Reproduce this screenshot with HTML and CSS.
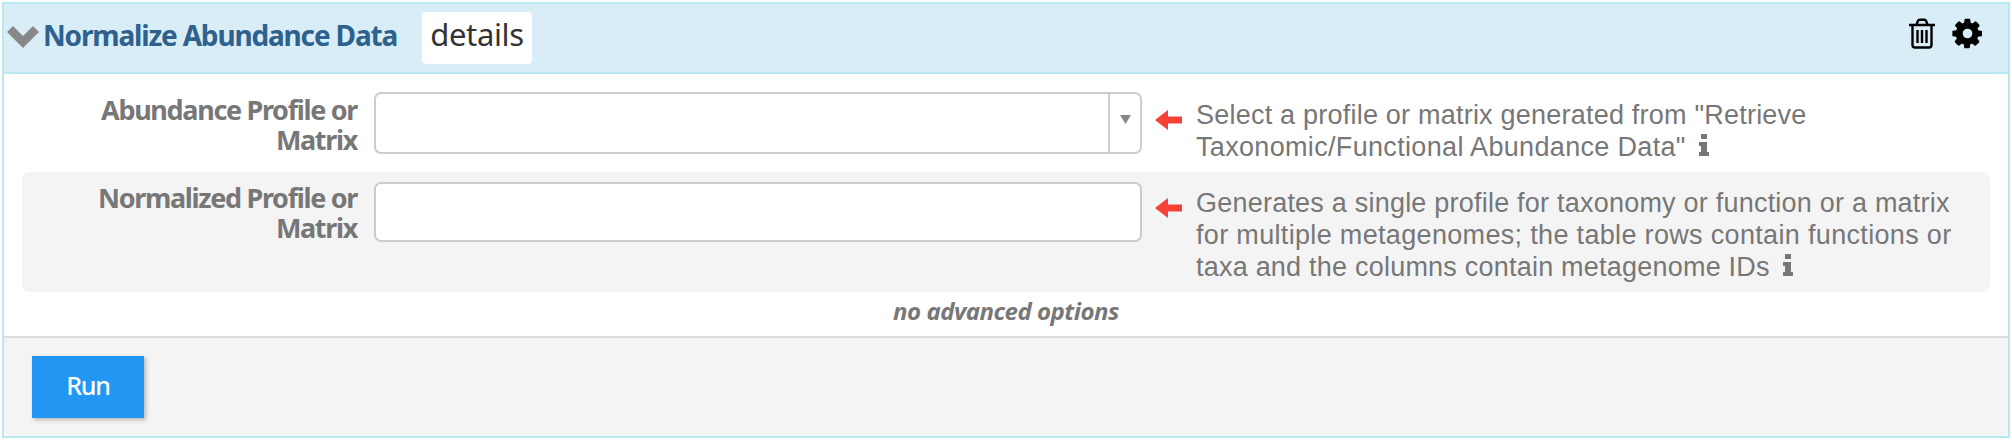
FILE: index.html
```html
<!DOCTYPE html>
<html lang="en">
<head>
<meta charset="utf-8">
<title>Normalize Abundance Data</title>
<link rel="stylesheet" href="styles.css">
</head>
<body>
<section class="panel">
  <header class="header">
    <svg class="chevron" viewBox="0 0 32 22"><path d="M0 6 6 0 16 10 26 0 32 6 16 22Z" fill="#888"/></svg>
    <h1 class="title"><span>Normalize Abundance Data</span></h1>
    <button class="details"><span>details</span></button>
    <div class="tools">
      <svg class="trash" viewBox="0 0 26 31" fill="none" stroke="#000" stroke-width="2.4"><path d="M0 7H26M7.500 6.500 9 2.800Q9.500 1.700 10.600 1.700H15.400Q16.500 1.700 17 2.800L18.500 6.500M3.500 7V27Q3.500 29.500 6 29.500H20Q22.500 29.500 22.500 27V7M8.500 12V25M13 12V25M17.500 12V25"/></svg>
      <svg class="gear" viewBox="0 0 1536 1536"><path fill-rule="evenodd" d="M1024 768a256 256 0 1 0-512 0 256 256 0 0 0 512 0zM1536 659v222c0 16-12 31-28 34l-185 28c-10 31-23 61-39 91 34 49 71 94 107 138 10 12 10 30 1 42-27 37-179 202-218 202-11 0-21-4-31-10l-138-108c-30 15-60 28-91 38-7 60-13 125-29 186-4 15-18 27-34 27H629c-16 0-32-12-34-28l-28-184c-31-10-61-22-90-37l-141 107c-8 7-19 10-30 10s-22-5-30-13C226 1361 149 1287 98 1216c-10-14-9-28 0-42 34-47 72-91 107-139-17-31-30-64-40-96L-18 912c-10-3-16-18-16-34V655c0-16 12-31 27-34l186-28c9-30 22-61 39-91-34-49-71-94-108-138-10-12-10-28 0-42 27-37 179-201 218-201 11 0 22 4 31 11l138 106c29-15 59-28 91-38 7-60 12-125 28-185 4-16 18-28 35-28h222c16 0 32 12 34 28l28 184c31 10 61 23 90 38l142-107c8-7 19-10 29-10 11 0 22 4 31 12 50 47 128 120 179 193 9 13 8 27-1 40-34 48-72 92-107 140 17 31 30 64 39 96l183 28c16 2 28 17 28 33z"/></svg>
    </div>
  </header>
  <div class="body">
    <div class="row first">
      <label class="label"><span>Abundance Profile or</span><span>Matrix</span></label>
      <div class="field select"><div class="toggle"><svg class="tri" viewBox="0 0 11 9"><path d="M0 0H11L5.500 9Z" fill="#888"/></svg></div></div>
      <svg class="arrow" viewBox="0 0 27 20"><path d="M0 10 13 0V6.500H27V13.500H13V20Z" fill="#f44336"/></svg>
      <p class="help"><span>Select a profile or matrix generated from "Retrieve</span><br><span class="wide">Taxonomic/Functional Abundance Data"</span><svg class="info" viewBox="0 0 10 22"><path d="M2 0H8V5H2ZM0 8H8V18H10V22H0V18H2V12H0Z" fill="#777"/></svg></p>
    </div>
    <div class="row shaded">
      <label class="label"><span>Normalized Profile or</span><span>Matrix</span></label>
      <div class="field"></div>
      <svg class="arrow" viewBox="0 0 27 20"><path d="M0 10 13 0V6.500H27V13.500H13V20Z" fill="#f44336"/></svg>
      <p class="help"><span>Generates a single profile for taxonomy or function or a matrix</span><br><span class="wide">for multiple metagenomes; the table rows contain functions or</span><br><span>taxa and the columns contain metagenome IDs</span><svg class="info" viewBox="0 0 10 22"><path d="M2 0H8V5H2ZM0 8H8V18H10V22H0V18H2V12H0Z" fill="#777"/></svg></p>
    </div>
    <div class="none"><span>no advanced options</span></div>
  </div>
  <footer class="footer"><button class="run"><span>Run</span></button></footer>
</section>
</body>
</html>
```
FILE: styles.css
```css
* { box-sizing: border-box; }
body { margin: 0; padding: 2px; background: #fff; font-family: "Noto Sans", sans-serif; color: #777; }
button { border: 0; padding: 0; font-family: inherit; }
svg { display: block; flex: none; }

.panel { width: 2008px; height: 436px; border: 2px solid #b8e8f0; display: flex; flex-direction: column; }

.header { height: 70px; background: #d9edf7; border-bottom: 2px solid #b8e8f0; display: flex; align-items: flex-start; padding-left: 3px; }
.chevron { width: 32px; height: 22px; margin-top: 22px; }
.title { width: 379px; margin: 11px 0 0 4px; font-size: 28px; line-height: 40px; font-weight: 700; letter-spacing: -1.170px; color: #2e618d; white-space: nowrap; }
.details { width: 110px; height: 52px; margin-top: 8px; border-radius: 4px; background: #fff; color: #333; font-size: 31px; line-height: 44px; letter-spacing: -0.350px; padding-bottom: 8px; }
.tools { margin-left: auto; display: flex; gap: 18px; padding-right: 26px; margin-top: 14px; }
.trash { width: 26px; height: 31px; }
.gear { width: 29px; height: 29px; margin-top: 1px; overflow: visible; }

.body { height: 262px; padding: 8px 18px 0; }
.row { display: grid; grid-template-columns: 335px 17px 768px 13px 27px 14px 1fr; border-radius: 8px; align-items: start; padding-top: 10px; }
.first { height: 90px; }
.shaded { height: 120px; background: #f4f4f4; }
.label { grid-column: 1; display: flex; flex-direction: column; align-items: flex-end; font-size: 27px; line-height: 30px; font-weight: 700; letter-spacing: -1.330px; padding-top: 3px; white-space: nowrap; }
.shaded .label { padding-top: 1px; }
.field { grid-column: 3; height: 60px; background: #fff; border: 2px solid #ccc; border-radius: 7px; }
.select { height: 62px; display: flex; justify-content: flex-end; }
.toggle { width: 32px; border-left: 2px solid #ccc; padding: 21px 0 0 10px; }
.tri { width: 11px; height: 9px; }
.arrow { grid-column: 5; width: 27px; height: 20px; margin-top: 18px; }
.shaded .arrow { margin-top: 16px; }
.help { grid-column: 7; margin: 7px 0 0; font: 27px/32px "Liberation Sans", Arial, sans-serif; letter-spacing: 0.220px; white-space: nowrap; }
.help .wide { letter-spacing: 0.330px; }
.shaded .help { margin-top: 5px; }
.info { display: inline-block; width: 10px; height: 22px; margin-left: 13px; vertical-align: 0; }
.none { text-align: center; font-size: 24px; line-height: 38px; font-weight: 700; font-style: italic; letter-spacing: -0.480px; }

.footer { flex: 1; border-top: 2px solid #ddd; background: #f4f4f4; padding: 18px 28px; border-radius: 0 0 5px 5px; }
.run { width: 112px; height: 62px; background: #2196f3; color: #fff; font-size: 25px; font-weight: 500; letter-spacing: -1.200px; box-shadow: 2px 2px 4px rgba(0,0,0,.25); display: block; line-height: 58px; padding-bottom: 4px; }
```
